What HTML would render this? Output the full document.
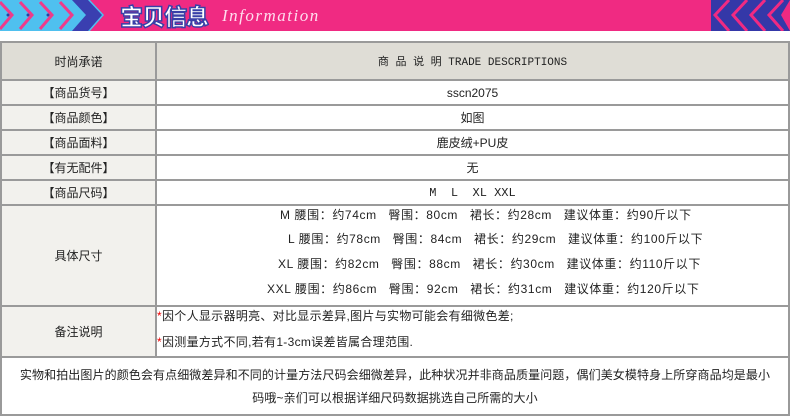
<!DOCTYPE html>
<html><head><meta charset="utf-8"><style>
body{margin:0;width:790px;height:417px;background:#fff;position:relative;overflow:hidden;font-family:"Liberation Sans","Noto Sans CJK SC",sans-serif;font-size:12px;color:#222}
.a{position:absolute}
.h{background:#9a9a9a;height:2px;left:0;width:790px}
.v{background:#9a9a9a;width:2px}
.c{position:absolute;display:flex;align-items:center;justify-content:center;white-space:nowrap}
.L{left:2px;width:153px;background:#f2f1ed}
.R{left:157px;width:631px;background:#fff}
.s div{white-space:nowrap;letter-spacing:0.6px}
</style></head><body>
<div class="a" style="left:0;top:0;width:790px;height:31px;background:#f02a82"></div>
<svg class="a" style="left:0;top:0" width="112" height="31">
<rect width="112" height="31" fill="#4fc0ef"/>
<g fill="none" stroke="#ef3a8a" stroke-width="3">
<path d="M0 2 L12 15 L0 29"/><path d="M20 2 L32 15 L20 29"/><path d="M40 2 L52 15 L40 29"/><path d="M60 2 L72 15 L60 29"/>
</g>
<path d="M72 0 L88 0 L102 15 L88 31 L72 31 L86 15Z" fill="#3a3fb0"/>
<path d="M90 0 L112 0 L112 31 L90 31 L104 15Z" fill="#f02a82"/>
<g fill="#2a3fa0"><circle cx="8" cy="15" r="1.5"/><circle cx="28" cy="15" r="1.5"/><circle cx="48" cy="15" r="1.5"/></g>
</svg>
<svg class="a" style="left:711px;top:0" width="79" height="31">
<rect width="79" height="31" fill="#3438a8"/>
<g fill="none" stroke="#f02a82" stroke-width="3">
<path d="M18 0 L4 15 L18 31"/><path d="M36 0 L22 15 L36 31"/><path d="M54 0 L40 15 L54 31"/><path d="M72 0 L58 15 L72 31"/>
</g>
<path d="M79 0 L79 31 L70 15Z" fill="#f02a82"/>
</svg>
<div class="a" style="left:120px;top:2px;font-size:23px;font-weight:900;color:#fff;letter-spacing:-1px;-webkit-text-stroke:1.5px #3840a8;font-family:'Noto Sans CJK SC',sans-serif;line-height:27px">宝贝信息</div>
<div class="a" style="left:222px;top:6px;font-size:17px;font-style:italic;color:#fde;letter-spacing:1.5px;font-family:'Liberation Serif',serif">Information</div>

<div class="c L" style="top:43px;height:36px;background:#dfddd6">时尚承诺</div>
<div class="c R" style="top:43px;height:36px;background:#dfddd6;font-family:'Liberation Mono','Noto Sans CJK SC',monospace;font-size:11px">商 品 说 明 TRADE DESCRIPTIONS</div>
<div class="c L" style="top:81px;height:23px">【商品货号】</div><div class="c R" style="top:81px;height:23px">sscn2075</div>
<div class="c L" style="top:106px;height:23px">【商品颜色】</div><div class="c R" style="top:106px;height:23px">如图</div>
<div class="c L" style="top:131px;height:23px">【商品面料】</div><div class="c R" style="top:131px;height:23px">鹿皮绒+PU皮</div>
<div class="c L" style="top:156px;height:23px">【有无配件】</div><div class="c R" style="top:156px;height:23px">无</div>
<div class="c L" style="top:181px;height:23px">【商品尺码】</div><div class="c R" style="top:181px;height:23px;font-family:'Liberation Mono',monospace">M&nbsp;&nbsp;L&nbsp;&nbsp;XL XXL</div>
<div class="c L" style="top:206px;height:99px">具体尺寸</div>
<div class="a R s" style="top:206px;height:99px;font-size:12px">
<div class="a" style="left:123px;top:0">M 腰围：约74cm&nbsp;&nbsp; 臀围：80cm&nbsp;&nbsp; 裙长：约28cm&nbsp;&nbsp; 建议体重：约90斤以下</div>
<div class="a" style="left:131px;top:24px">L 腰围：约78cm&nbsp;&nbsp; 臀围：84cm&nbsp;&nbsp; 裙长：约29cm&nbsp;&nbsp; 建议体重：约100斤以下</div>
<div class="a" style="left:121px;top:49px">XL 腰围：约82cm&nbsp;&nbsp; 臀围：88cm&nbsp;&nbsp; 裙长：约30cm&nbsp;&nbsp; 建议体重：约110斤以下</div>
<div class="a" style="left:110px;top:74px">XXL 腰围：约86cm&nbsp;&nbsp; 臀围：92cm&nbsp;&nbsp; 裙长：约31cm&nbsp;&nbsp; 建议体重：约120斤以下</div>
</div>
<div class="c L" style="top:307px;height:49px">备注说明</div>
<div class="a R s" style="top:307px;height:49px;font-size:12px">
<div class="a" style="left:0;top:0;letter-spacing:0.3px"><span style="color:#e00">*</span>因个人显示器明亮、对比显示差异,图片与实物可能会有细微色差;</div>
<div class="a" style="left:0;top:26px;letter-spacing:0.3px"><span style="color:#e00">*</span>因测量方式不同,若有1-3cm误差皆属合理范围.</div>
</div>
<div class="a" style="left:2px;top:358px;width:786px;height:56px;text-align:center;line-height:23px;padding-top:6px;font-size:12px;letter-spacing:0.1px;white-space:nowrap">实物和拍出图片的颜色会有点细微差异和不同的计量方法尺码会细微差异，此种状况并非商品质量问题，偶们美女模特身上所穿商品均是最小<br>码哦~亲们可以根据详细尺码数据挑选自己所需的大小</div>

<div class="a h" style="top:41px"></div>
<div class="a h" style="top:79px"></div>
<div class="a h" style="top:104px"></div>
<div class="a h" style="top:129px"></div>
<div class="a h" style="top:154px"></div>
<div class="a h" style="top:179px"></div>
<div class="a h" style="top:204px"></div>
<div class="a h" style="top:305px"></div>
<div class="a h" style="top:356px"></div>
<div class="a h" style="top:414px"></div>
<div class="a v" style="left:0;top:41px;height:375px"></div>
<div class="a v" style="left:788px;top:41px;height:375px"></div>
<div class="a v" style="left:155px;top:41px;height:317px"></div>
</body></html>
